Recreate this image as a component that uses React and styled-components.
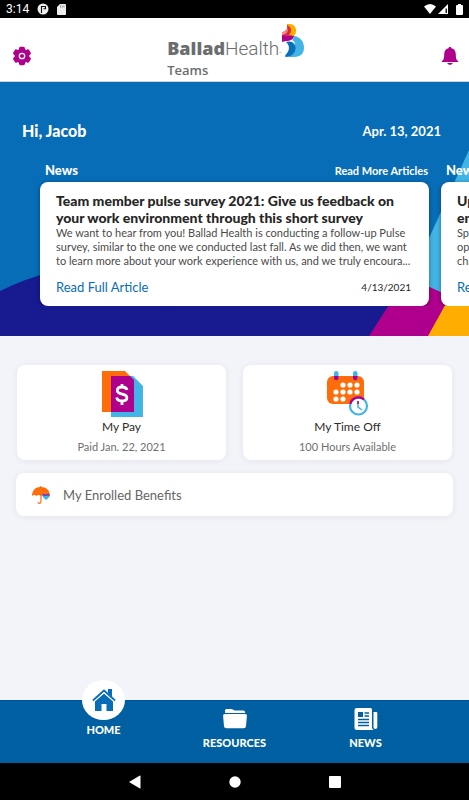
import React from "react";
import styled, { createGlobalStyle } from "styled-components";

const color = {
  blue: "#076db7",
  nav: "#0060a1",
  navy: "#171b8f",
  magenta: "#ae008c",
  sky: "#42b4e6",
  yellow: "#ffad00",
  orange: "#ff6d0a",
  page: "#f3f4f9",
  grey: "#6b6d6e",
};

const GlobalStyle = createGlobalStyle`
  *, *::before, *::after { box-sizing: border-box; }
  body { margin: 0; font-family: Lato, "Open Sans", sans-serif; background: ${color.page}; }
  button { font: inherit; color: inherit; background: none; border: 0; padding: 0; cursor: pointer; }
  a { color: inherit; text-decoration: none; }
  h1, h2, h3, p { margin: 0; }
  svg { display: block; }
`;

const Screen = styled.div`
  min-height: 100vh;
  display: flex;
  flex-direction: column;
  overflow: hidden;
`;

const StatusBar = styled.div`
  display: flex;
  align-items: center;
  gap: 8px;
  height: 18px;
  padding: 0 6px;
  background: #000;
  color: #fff;
  font: 12px/18px Roboto, sans-serif;
`;

const StatusSpacer = styled.span`
  flex: 1;
`;

const StatusGroup = styled.span`
  display: flex;
  align-items: center;
  gap: 2px;
`;

const Header = styled.header`
  display: grid;
  grid-template-columns: 1fr auto 1fr;
  align-items: center;
  height: 64px;
  padding: 0 10px 0 12px;
  background: #fff;
  border-bottom: 1px solid #cfd3d6;
`;

const IconButton = styled.button`
  justify-self: ${(p) => p.$side};
  margin-top: 12px;
`;

const Brand = styled.div`
  display: flex;
  align-items: flex-start;
  color: ${color.grey};
`;

const Wordmark = styled.div`
  padding-top: 17px;
  font-family: Roboto, sans-serif;
  font-size: 19px;
  line-height: 24px;
  font-weight: 300;
  white-space: nowrap;
  b { font-family: "Open Sans", sans-serif; font-size: 18px; font-weight: 800; line-height: 1; }
  sup { font-size: 4px; line-height: 0; vertical-align: baseline; }
`;

const BrandSub = styled.div`
  font-family: "Open Sans", sans-serif;
  font-size: 13px;
  line-height: 18px;
  font-weight: 600;
`;

const BrandLogo = styled.svg`
  margin-top: 4px;
`;

const Hero = styled.section`
  position: relative;
  background: ${color.blue};
  color: #fff;
  padding: 40px 0 30px;
`;

const HeroArt = styled.svg`
  position: absolute;
  inset: 0;
  width: 100%;
  height: 100%;
`;

const Greeting = styled.div`
  position: relative;
  display: flex;
  justify-content: space-between;
  padding: 0 28px 0 22px;
  line-height: 18px;
  font-size: 13px;
  font-weight: 700;
  h1 { font-size: 16px; font-weight: 900; }
`;

const Carousel = styled.div`
  position: relative;
  display: flex;
  gap: 12px;
  padding: 20px 0 0 40px;
  overflow: hidden;
`;

const Slide = styled.section`
  flex: 0 0 calc(100% - 40px);
  min-width: 0;
`;

const SlideHead = styled.div`
  display: flex;
  justify-content: space-between;
  align-items: center;
  height: 22px;
  padding: 0 1px 2px 5px;
  font-size: 11px;
  font-weight: 700;
  h2 { font-size: 13px; font-weight: 900; }
`;

const Article = styled.article`
  display: flex;
  flex-direction: column;
  height: 124px;
  padding: 10px 18px 10px 16px;
  border-radius: 8px;
  background: #fff;
  color: #262626;
  white-space: pre;
  box-shadow: 0 1px 4px rgba(0, 0, 0, 0.4);
  h3 { font-size: 14px; line-height: 17px; font-weight: 900; }
  p { color: #4a4a4a; font-size: 11px; line-height: 14px; }
`;

const ArticleFoot = styled.footer`
  display: flex;
  justify-content: space-between;
  align-items: center;
  margin-top: auto;
  line-height: 17px;
  font-size: 10px;
  a { color: ${color.blue}; font-size: 13px; }
`;

const Main = styled.main`
  flex: 1;
  padding: 29px 16px;
`;

const Tiles = styled.div`
  display: grid;
  grid-template-columns: 1fr 1fr;
  gap: 17px;
  padding: 0 1px;
`;

const Tile = styled.button`
  display: flex;
  flex-direction: column;
  align-items: center;
  height: 95px;
  padding-top: 6px;
  border-radius: 8px;
  background: #fff;
  box-shadow: 0 1px 6px rgba(30, 40, 90, 0.07);
  color: #707070;
  font-size: 11px;
  line-height: 16px;
  strong { font-size: 12px; line-height: 18px; font-weight: 400; color: #2b2b2b; }
  span { margin-top: 3px; }
`;

const Benefits = styled.button`
  display: flex;
  align-items: center;
  gap: 12px;
  width: 100%;
  height: 43px;
  margin-top: 13px;
  padding: 0 15px;
  border-radius: 8px;
  background: #fff;
  box-shadow: 0 1px 6px rgba(30, 40, 90, 0.07);
  color: #666;
  font-size: 13px;
`;

const TabBar = styled.nav`
  display: grid;
  grid-template-columns: repeat(3, 131px);
  justify-content: center;
  height: 63px;
  background: ${color.nav};
  border-top: 1px solid #0052a0;
  color: #fff;
`;

const Tab = styled.a`
  display: flex;
  flex-direction: column;
  align-items: center;
  gap: 2px;
  margin-top: ${(p) => (p.$active ? -21 : 3)}px;
  font-size: 11px;
  line-height: 16px;
  font-weight: 900;
`;

const TabIcon = styled.span`
  display: grid;
  place-items: center;
  width: 43px;
  height: ${(p) => (p.$active ? 40 : 29)}px;
  border-radius: 50%;
  background: ${(p) => (p.$active ? "#fff" : "transparent")};
`;

const SystemBar = styled.div`
  display: grid;
  grid-template-columns: repeat(3, 100px);
  justify-content: center;
  height: 37px;
  background: #000;
  button { display: grid; place-items: center; }
`;

const Gear = () => (
  <svg width="20" height="20" viewBox="0 0 20 20" fill={color.magenta}>
    {[0, 60, 120].map((a) => (
      <rect key={a} x="7" y="0.8" width="6" height="18.4" rx="1.6" transform={`rotate(${a} 10 10)`} />
    ))}
    <circle cx="10" cy="10" r="7.400" />
    <circle cx="10" cy="10" r="2.7" fill={color.magenta} stroke="#fff" strokeWidth="1.3" />
  </svg>
);

const Bell = () => (
  <svg width="18" height="20" viewBox="0 0 18 20" fill={color.magenta}>
    <path d="M9 1c.8 0 1.400.5 1.500 1.200 3 .8 4.300 3 4.300 6 0 4.500.8 5.800 2.400 7v.8H.8v-.8c1.600-1.200 2.400-2.500 2.400-7 0-3 1.300-5.200 4.300-6C7.600 1.500 8.200 1 9 1ZM6.200 17h5.600c-.5 1.200-1.500 1.800-2.800 1.800S6.700 18.200 6.200 17Z" />
  </svg>
);

const BrandMark = () => (
  <BrandLogo width="22" height="34" viewBox="0 0 22 34" aria-hidden="true">
    <path d="M5 0c6-1 10 3 9 8-.3 2-1.500 3.500-3 4.500L5 11Z" fill={color.yellow} />
    <path d="M5 1c5 2 5 7 2 10l-7 1V8c4 0 6-3 5-7Z" fill="#e12b2b" />
    <path d="M0 8c3 .5 5.500-1 5.500-4C7 8 4 10.500 0 11Z" fill="#f58a8a" />
    <path d="M0 11c4 1 8-.5 12 1 0 3-4 5-8 5L0 18Z" fill={color.magenta} />
    <path d="M12 12c7 1 10 6 10 12 0 5-3 9-10 9H6c5-3 7-6 7-11 0-3-.3-5-3-6 1-1 2-2 2-4Z" fill={color.sky} />
    <path d="M4 18c6-2 10 2 9.500 7-.5 4-4 8-9.500 8-1 0-1-1-.5-2 4-4 5-9 .5-13Z" fill="#0870ba" />
  </BrandLogo>
);

const PayIcon = () => (
  <svg width="42" height="47" viewBox="0 0 42 47">
    <path d="M1 0h23l9 9v32H1Z" fill={color.orange} />
    <path d="M10 5h22l10 10v31H10Z" fill={color.sky} />
    <path d="M10 5h19l4 4v32H10Z" fill={color.magenta} />
    <path d="M26 19c-.5-2-2.200-3-5-3-3 0-4.700 1.400-4.700 3.500 0 5 9.600 2.300 9.600 7 0 2.200-2 3.500-4.900 3.500-2.800 0-4.900-1.200-5.300-3.500M21 13v3.500M21 30v4" fill="none" stroke="#fff" strokeWidth="2.800" />
  </svg>
);

const DOTS = [[17, 14], [24, 14], [31, 14], [10, 21], [17, 21], [24, 21], [31, 21], [10, 28], [17, 28]];

const TimeOffIcon = () => (
  <svg width="44" height="47" viewBox="0 0 44 47">
    <rect x="1" y="5" width="37" height="28" rx="6" fill={color.orange} />
    {[8, 27].map((x) => (
      <g key={x}>
        <rect x={x} y="0" width="4.500" height="9" rx="2.200" fill={color.sky} />
        <path d={`M${x} 5h4.500v2a2.200 2.200 0 0 1-4.500 0Z`} fill={color.magenta} />
      </g>
    ))}
    {DOTS.map(([x, y]) => (
      <circle key={`${x}-${y}`} cx={x} cy={y} r="2.600" fill="#fff" />
    ))}
    <circle cx="32.500" cy="35" r="8.500" fill="#fff" stroke={color.sky} strokeWidth="2.200" />
    <path d="M24.200 33a8.500 8.500 0 0 1 13.800-4.500" fill="none" stroke={color.magenta} strokeWidth="2.200" />
    <path d="M32 30v6l4 3" fill="none" stroke={color.sky} strokeWidth="1.500" />
    <path d="M32 30v3" stroke={color.magenta} strokeWidth="1.500" />
  </svg>
);

const Umbrella = () => (
  <svg width="20" height="20" viewBox="0 0 20 20">
    <path d="M1 11C1 5 5 2 9.200 2V1h1v1C15 2 19 5 19 11c-1.500-1.300-3-1.300-4.500 0-1.500-1.300-3-1.300-4.500 0-1.500-1.300-3-1.300-4.500 0C4 9.700 2.500 9.700 1 11Z" fill={color.orange} />
    <path d="M10 10v6.500c0 2.500-2.800 2.500-2.800.5" fill="none" stroke={color.orange} strokeWidth="1.200" />
    <path d="M11.200 10c0-1.500 2.800-2 3.700 0 1-2 3.900-1.500 3.900.5 0 1.500-2 3-3.800 4.500-1.800-1.500-3.800-3-3.800-5Z" fill={color.sky} />
    <path d="M11.200 10c.8-1.500 2.800-1.500 3.700 0 1-1.500 3-1.500 3.700 0-.5 1-1.500 1-2.200.3-.8.8-2.200.8-3 0-.8.7-1.700.7-2.200-.3Z" fill="#8a169b" />
  </svg>
);

const Home = () => (
  <svg width="24" height="24" viewBox="0 0 24 24" fill={color.blue}>
    <path d="M16 1h4v8l-4-4Z" />
    <path d="M1 12.500 12 2.500l11 10" fill="none" stroke={color.blue} strokeWidth="2" />
    <path d="m12 5.500 9 8V23h-6.500v-7h-5v7H3v-9.500Z" />
    <path d="M2 13.600 12 4.500l10 9.100" fill="none" stroke="#fff" strokeWidth="1" />
  </svg>
);

const Folder = () => (
  <svg width="24" height="21" viewBox="0 0 24 21" fill="#fff">
    <path d="M2 5V3c0-1.500.7-2 2-2h4c2 0 2.500 1.500 4 1.500h8c1.500 0 2.200.7 2.200 2V5Z" />
    <path d="M2 6h20c1.500 0 2 .8 1.900 2L23 18c-.2 1.600-1 2.200-2.500 2.200h-17C2 20.200 1.200 19.600 1 18L.1 8C0 6.800.5 6 2 6Z" />
  </svg>
);

const Newspaper = () => (
  <svg width="24" height="24" viewBox="0 0 24 24">
    <path d="M3 1h13c1.500 0 2 .5 2 2v17c0 1.500.5 2.300 2 3H3c-1.800 0-2.500-.8-2.500-2.500V3.500C.5 1.800 1.200 1 3 1ZM19.500 5H22c.9 0 1.300.5 1.300 1.300V20c0 2.500-3.800 2.500-3.800 0Z" fill="#fff" />
    <path d="M4 5h5v5H4Z" fill={color.nav} />
    <path d="M10.500 6H15M10.500 9H15M4 12.500h11M4 15.500h11M4 18.500h11" stroke={color.nav} strokeWidth="1.300" />
  </svg>
);

const articles = [
  {
    title: "Team member pulse survey 2021: Give us feedback on\nyour work environment through this short survey",
    text: "We want to hear from you! Ballad Health is conducting a follow-up Pulse\nsurvey, similar to the one we conducted last fall. As we did then, we want\nto learn more about your work experience with us, and we truly encoura...",
    date: "4/13/2021",
  },
  {
    title: "Updates to parking and\nentrances this spring",
    text: "Spring construction begins soon and\nopens new entrances. See the\nchanges here.",
    date: "4/13/2021",
  },
];

export default function App() {
  return (
    <>
      <GlobalStyle />
      <Screen>
        <StatusBar>
          <span>3:14</span>
          <svg width="12" height="12" viewBox="0 0 12 12">
            <circle cx="6" cy="6" r="5.500" fill="#eee" />
            <path d="M4.500 10V3.500h4v2.200H6.500" fill="none" stroke="#111" strokeWidth="1.100" />
          </svg>
          <svg width="9" height="11" viewBox="0 0 9 11">
            <path d="M3 0h5q1 0 1 1v9q0 1-1 1H1q-1 0-1-1V3Z" fill="#eee" />
            <path d="M3.500 1.500v2M5.300 1.500v2M7 1.500v2" stroke="#777" strokeWidth=".7" />
          </svg>
          <StatusSpacer />
          <StatusGroup>
            <svg width="12" height="10" viewBox="0 0 12 10">
              <path d="M0 2.500Q6-2.500 12 2.500L6 10Z" fill="#fff" />
            </svg>
            <svg width="10" height="10" viewBox="0 0 10 10">
              <path d="M0 10 10 0v10Z" fill="#fff" />
              <path d="M7.500 4.500H9V9H7.500Z" fill="#222" />
            </svg>
          </StatusGroup>
          <svg width="7" height="11" viewBox="0 0 7 11">
            <path d="M2 0h3v1h1q1 0 1 1v8q0 1-1 1H1q-1 0-1-1V2q0-1 1-1h1Z" fill="#fff" />
          </svg>
        </StatusBar>

        <Header>
          <IconButton $side="start" aria-label="Settings"><Gear /></IconButton>
          <Brand>
            <div>
              <Wordmark><b>Ballad</b>Health<sup>™</sup></Wordmark>
              <BrandSub>Teams</BrandSub>
            </div>
            <BrandMark />
          </Brand>
          <IconButton $side="end" aria-label="Notifications"><Bell /></IconButton>
        </Header>

        <Hero>
          <HeroArt viewBox="0 0 469 254" preserveAspectRatio="none" aria-hidden="true">
            <path d="M0 209Q50 184 110 182Q250 178 400 254H0Z" fill={color.navy} />
            <path d="M200 180H420L369 254H150Z" fill={color.navy} />
            <path d="M469 68 400 220 469 254Z" fill={color.sky} />
            <path d="M369 254 405 198Q440 204 469 230V254Z" fill={color.magenta} />
            <path d="M428 254 469 180V254Z" fill={color.yellow} />
          </HeroArt>
          <Greeting>
            <h1>Hi, Jacob</h1>
            <span>Apr. 13, 2021</span>
          </Greeting>
          <Carousel>
            {articles.map((a) => (
              <Slide key={a.title}>
                <SlideHead>
                  <h2>News</h2>
                  <a href="#articles">Read More Articles</a>
                </SlideHead>
                <Article>
                  <h3>{a.title}</h3>
                  <p>{a.text}</p>
                  <ArticleFoot>
                    <a href="#article">Read Full Article</a>
                    <time>{a.date}</time>
                  </ArticleFoot>
                </Article>
              </Slide>
            ))}
          </Carousel>
        </Hero>

        <Main>
          <Tiles>
            <Tile><PayIcon /><strong>My Pay</strong><span>Paid Jan. 22, 2021</span></Tile>
            <Tile><TimeOffIcon /><strong>My Time Off</strong><span>100 Hours Available</span></Tile>
          </Tiles>
          <Benefits><Umbrella />My Enrolled Benefits</Benefits>
        </Main>

        <TabBar>
          <Tab href="#home" $active><TabIcon $active><Home /></TabIcon>HOME</Tab>
          <Tab href="#resources"><TabIcon><Folder /></TabIcon>RESOURCES</Tab>
          <Tab href="#news"><TabIcon><Newspaper /></TabIcon>NEWS</Tab>
        </TabBar>
        <SystemBar>
          <button aria-label="Back">
            <svg width="12" height="14" viewBox="0 0 12 14"><path d="M0 7 10.500.7Q11.500 0 11.500 1v12q0 1-1 .3Z" fill="#fff" /></svg>
          </button>
          <button aria-label="Home">
            <svg width="12" height="12" viewBox="0 0 12 12"><circle cx="6" cy="6" r="5.700" fill="#fff" /></svg>
          </button>
          <button aria-label="Recent apps">
            <svg width="12" height="12" viewBox="0 0 12 12"><rect width="12" height="12" rx="1" fill="#fff" /></svg>
          </button>
        </SystemBar>
      </Screen>
    </>
  );
}
